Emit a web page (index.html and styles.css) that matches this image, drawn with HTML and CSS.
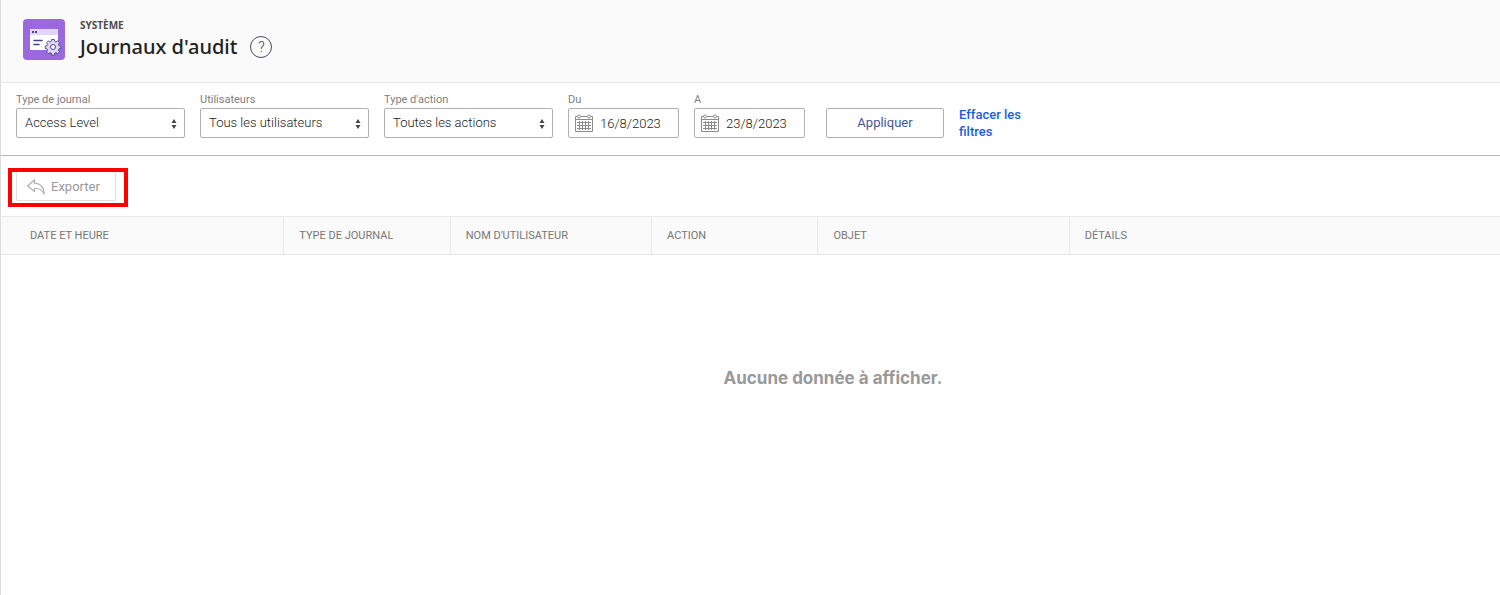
FILE: index.html
```html
<!DOCTYPE html>
<html lang="fr">
<head>
<meta charset="utf-8">
<title>Journaux d'audit</title>
<link rel="stylesheet" href="styles.css">
</head>
<body>
<svg class="sprite" width="0" height="0" aria-hidden="true">
  <symbol id="arrows" viewBox="0 0 6 10"><path d="M3 0 5.500 4h-5zM.5 6h5L3 10z" fill="#444"/></symbol>
  <symbol id="calendar" viewBox="0 0 18 19">
    <g fill="none" stroke="#8c8c8c">
      <path d="M2.500 2.500H.5v15h17v-15h-2M5.500 2.500h7M.5 5.500h17"/>
      <circle cx="4" cy="2.500" r="1.500"/><circle cx="14" cy="2.500" r="1.500"/>
      <path d="M2 8.500h14M2 11.500h14M2 14.500h14M4.500 7v9M7.500 7v9M10.500 7v9M13.500 7v9"/>
    </g>
  </symbol>
</svg>
<main class="page">
  <header class="header">
    <svg class="logo" viewBox="0 0 42 41" aria-hidden="true">
      <rect width="42" height="41" rx="4" fill="#9b69dd"/>
      <rect x="7" y="10" width="28" height="21" rx="1" fill="#fff"/>
      <path d="M8 10h26a1 1 0 0 1 1 1v5H7v-5a1 1 0 0 1 1-1z" fill="#e3d5f7"/>
      <path d="M9 12h2v2H9zM12 12h2v2h-2z" fill="#474684"/>
      <path d="M11 21.500h8M11 25.500h5" stroke="#474684" stroke-width="1.600" stroke-linecap="round"/>
      <g transform="translate(30 27)">
        <path d="M-1.300-6.500h2.600l.4 1.900 1.300.6 1.700-1.100 1.800 1.800-1.100 1.700.5 1.300 1.900.4v2.400l-1.900.4-.5 1.300 1.100 1.700-1.800 1.800-1.700-1.100-1.300.6-.4 1.900h-2.600l-.4-1.900-1.300-.6-1.700 1.100-1.800-1.800 1.100-1.700-.5-1.300-1.900-.4v-2.400l1.900-.4.5-1.300-1.100-1.700 1.800-1.800 1.700 1.100 1.300-.6z" fill="#e3d5f7" stroke="#474684" stroke-width=".9" stroke-linejoin="round"/>
        <circle cy="1" r="2.500" fill="#fff" stroke="#474684"/>
      </g>
    </svg>
    <div class="heading">
      <p class="eyebrow">SYSTÈME</p>
      <h1 class="title">Journaux d'audit</h1>
    </div>
    <button class="help" type="button" aria-label="Aide">?</button>
  </header>

  <form class="filters">
    <div class="field">
      <label for="log">Type de journal</label>
      <div class="control"><select id="log"><option>Access Level</option></select><svg class="arrows"><use href="#arrows"/></svg></div>
    </div>
    <div class="field">
      <label for="users">Utilisateurs</label>
      <div class="control"><select id="users"><option>Tous les utilisateurs</option></select><svg class="arrows"><use href="#arrows"/></svg></div>
    </div>
    <div class="field">
      <label for="action">Type d'action</label>
      <div class="control"><select id="action"><option>Toutes les actions</option></select><svg class="arrows"><use href="#arrows"/></svg></div>
    </div>
    <div class="field field-date">
      <label for="from">Du</label>
      <div class="control"><svg class="calendar"><use href="#calendar"/></svg><input id="from" type="text" value="16/8/2023"></div>
    </div>
    <div class="field field-date">
      <label for="to">A</label>
      <div class="control"><svg class="calendar"><use href="#calendar"/></svg><input id="to" type="text" value="23/8/2023"></div>
    </div>
    <button class="apply" type="button">Appliquer</button>
    <a class="clear" href="#">Effacer les filtres</a>
  </form>

  <div class="toolbar">
    <div class="export-wrap">
      <button class="export" type="button" disabled>
        <svg class="export-icon" viewBox="0 0 18 16" aria-hidden="true"><path d="M7.500.8.7 7l6.800 5.500V9.300c4.300-.3 7.400 1.200 9.600 5.700C17 8.500 13.500 4.600 7.500 4.200z" fill="none" stroke="#b0b0b0" stroke-width="1.200" stroke-linejoin="round"/></svg>
        Exporter
      </button>
    </div>
  </div>

  <table class="logs">
    <thead>
      <tr>
        <th class="w-date">DATE ET HEURE</th>
        <th class="w-type">TYPE DE JOURNAL</th>
        <th class="w-user">NOM D'UTILISATEUR</th>
        <th class="w-action">ACTION</th>
        <th class="w-object">OBJET</th>
        <th>DÉTAILS</th>
      </tr>
    </thead>
    <tbody>
      <tr><td class="empty" colspan="6">Aucune donnée à afficher.</td></tr>
    </tbody>
  </table>
</main>
</body>
</html>
```
FILE: styles.css
```css
* { box-sizing: border-box; }

body {
  margin: 0;
  background: #fff;
  color: #222;
  font: 300 13px/16px Roboto, "Liberation Sans", sans-serif;
}

button, input, select { font: inherit; color: inherit; }

.sprite { position: absolute; }

.page {
  min-height: 100vh;
  border-left: 1px solid #ddd;
  overflow: hidden;
}

.header {
  display: flex;
  align-items: flex-start;
  padding: 19px 22px 21px;
  background: #fafafa;
  border-bottom: 1px solid #e8e8e8;
}

.logo { width: 42px; height: 41px; margin-right: 15px; }

.heading { font-family: "Noto Sans", "Open Sans", sans-serif; }

.eyebrow {
  margin: 0;
  font-family: "Open Sans", sans-serif;
  font-size: 10px;
  line-height: 13px;
  font-weight: 700;
  color: #4b4b4b;
}

.title {
  margin: 0;
  font-size: 20px;
  line-height: 29px;
  font-weight: 500;
  color: #222;
}

.help {
  width: 22px;
  height: 22px;
  margin: 17px 0 0 13px;
  padding: 0;
  border: 1px solid #4b4b5a;
  border-radius: 50%;
  background: none;
  color: #3b3b4a;
  font-size: 14px;
  line-height: 20px;
}

.filters {
  display: flex;
  align-items: flex-end;
  gap: 15px;
  padding: 9px 15px 17px;
  border-bottom: 1px solid #b8b8b8;
}

.field { width: 169px; }
.field-date { width: 111px; }

.field label {
  display: block;
  font-size: 11px;
  line-height: 16px;
  font-weight: 400;
  color: #808080;
}

.control {
  display: flex;
  align-items: center;
  height: 30px;
  border: 1px solid #b0b0b0;
  border-radius: 2px;
  background: #fff;
}

.control select {
  appearance: none;
  width: 100%;
  height: 28px;
  padding: 0 20px 0 8px;
  border: 0;
  background: none;
}

.arrows {
  flex: none;
  width: 6px;
  height: 10px;
  margin: 2px 7px 0 -13px;
  pointer-events: none;
}

.calendar { flex: none; width: 18px; height: 19px; margin-left: 6px; }

.control input {
  min-width: 0;
  flex: 1;
  height: 28px;
  padding: 0 0 0 7px;
  border: 0;
  background: none;
}

.apply {
  width: 118px;
  height: 30px;
  margin-left: 6px;
  border: 1px solid #b0b0b0;
  border-radius: 2px;
  background: #fff;
  color: #41599a;
  font-weight: 400;
}

.clear {
  width: 72px;
  line-height: 17px;
  margin-bottom: -2px;
  color: #1b5fe0;
  font-weight: 500;
  text-decoration: none;
}

.toolbar { display: flex; padding: 12px 7px 9px; }

.export-wrap { padding: 0 8px 2px 4px; border: 4px solid #f00; }

.export {
  display: flex;
  align-items: center;
  gap: 6px;
  width: 100px;
  height: 29px;
  padding: 2px 10px 0;
  border: 1px solid #e0e0e0;
  border-top: 0;
  border-radius: 0 0 2px 2px;
  background: #fff;
  color: #999;
  font-weight: 400;
}

.export-icon { flex: none; width: 18px; height: 16px; }

/* The log grid is wider than the viewport; its last column is clipped. */
.logs {
  width: 111%;
  table-layout: fixed;
  border-collapse: collapse;
}

.logs th {
  height: 38px;
  padding: 0 15px;
  border: solid #e8e8e8;
  border-width: 1px 0 1px 1px;
  background: #fafafa;
  color: #777;
  font-size: 11px;
  font-weight: 400;
  text-align: left;
}

.logs th:first-child { padding-left: 29px; border-left: 0; }

.w-date { width: 17%; }
.w-type { width: 10%; }
.w-user { width: 12.1%; }
.w-action { width: 10%; }
.w-object { width: 15.1%; }

.logs .empty {
  padding: 111px 0 0;
  color: #999;
  font-family: Inter, sans-serif;
  font-size: 17px;
  line-height: 24px;
  font-weight: 700;
  text-align: center;
}
```
